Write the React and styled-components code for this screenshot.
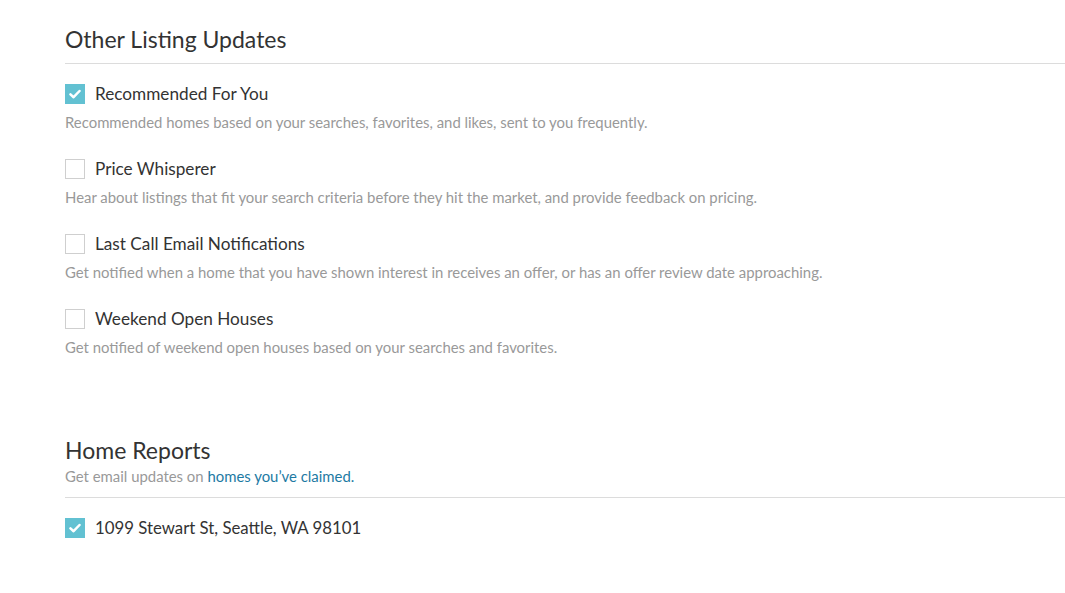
import styled, { createGlobalStyle } from "styled-components";

const Global = createGlobalStyle`
  body {
    margin: 0;
    background: #fff;
    font-family: Lato, "Noto Sans", sans-serif;
    color: #333;
  }
`;

const Page = styled.div`
  padding: 23px 0 0 65px;
`;

const Section = styled.section`
  margin-bottom: ${(p) => p.gap || 0}px;
`;

const Title = styled.h2`
  margin: 0;
  font-size: 23px;
  font-weight: 400;
  line-height: 32px;
  color: #333;
`;

const Subtitle = styled.p`
  margin: 0;
  font-size: 14.9px;
  line-height: 20px;
  color: #999;
  a {
    color: #1d7aa3;
    text-decoration: none;
  }
`;

const Divider = styled.hr`
  margin: ${(p) => p.top || 8}px 0 0;
  border: 0;
  border-top: 1px solid #dcdcdc;
`;

const List = styled.div`
  display: flex;
  flex-direction: column;
  gap: 26px;
  padding-top: 19px;
`;

const Option = styled.div`
  display: flex;
  flex-direction: column;
  gap: 7px;
`;

const Row = styled.label`
  display: flex;
  align-items: center;
  gap: 10px;
  font-size: ${(p) => p.size || 17.2}px;
  line-height: 22px;
  color: #333;
  cursor: pointer;
`;

const Box = styled.span`
  width: 20px;
  height: 20px;
  box-sizing: border-box;
  flex: none;
  display: flex;
  align-items: center;
  justify-content: center;
  background: ${(p) => (p.checked ? "#62c1d2" : "#fff")};
  border: 1px solid ${(p) => (p.checked ? "#62c1d2" : "#cfcfcf")};
`;

const Desc = styled.p`
  margin: 0;
  font-size: 14.9px;
  line-height: 20px;
  color: #999;
`;

const Check = () => (
  <svg width="12" height="10" viewBox="0 0 12 10">
    <path d="M1.5 5.4 L4.6 8.2 L10.5 2" fill="none" stroke="#fff" strokeWidth="2.5" strokeLinecap="round" strokeLinejoin="round" />
  </svg>
);

const CheckBox = ({ checked }) => <Box checked={checked}>{checked && <Check />}</Box>;

const options = [
  {
    label: "Recommended For You",
    desc: "Recommended homes based on your searches, favorites, and likes, sent to you frequently.",
    checked: true,
  },
  {
    label: "Price Whisperer",
    desc: "Hear about listings that fit your search criteria before they hit the market, and provide feedback on pricing.",
  },
  {
    label: "Last Call Email Notifications",
    desc: "Get notified when a home that you have shown interest in receives an offer, or has an offer review date approaching.",
  },
  {
    label: "Weekend Open Houses",
    desc: "Get notified of weekend open houses based on your searches and favorites.",
  },
];

export default function App() {
  return (
    <Page>
      <Global />
      <Section gap={77}>
        <Title>Other Listing Updates</Title>
        <Divider />
        <List>
          {options.map((o) => (
            <Option key={o.label}>
              <Row>
                <CheckBox checked={o.checked} />
                {o.label}
              </Row>
              <Desc>{o.desc}</Desc>
            </Option>
          ))}
        </List>
      </Section>
      <Section>
        <Title>Home Reports</Title>
        <Subtitle>
          Get email updates on <a href="#">homes you’ve claimed.</a>
        </Subtitle>
        <Divider top={11} />
        <List>
          <Row size={16.8}>
            <CheckBox checked />
            1099 Stewart St, Seattle, WA 98101
          </Row>
        </List>
      </Section>
    </Page>
  );
}
